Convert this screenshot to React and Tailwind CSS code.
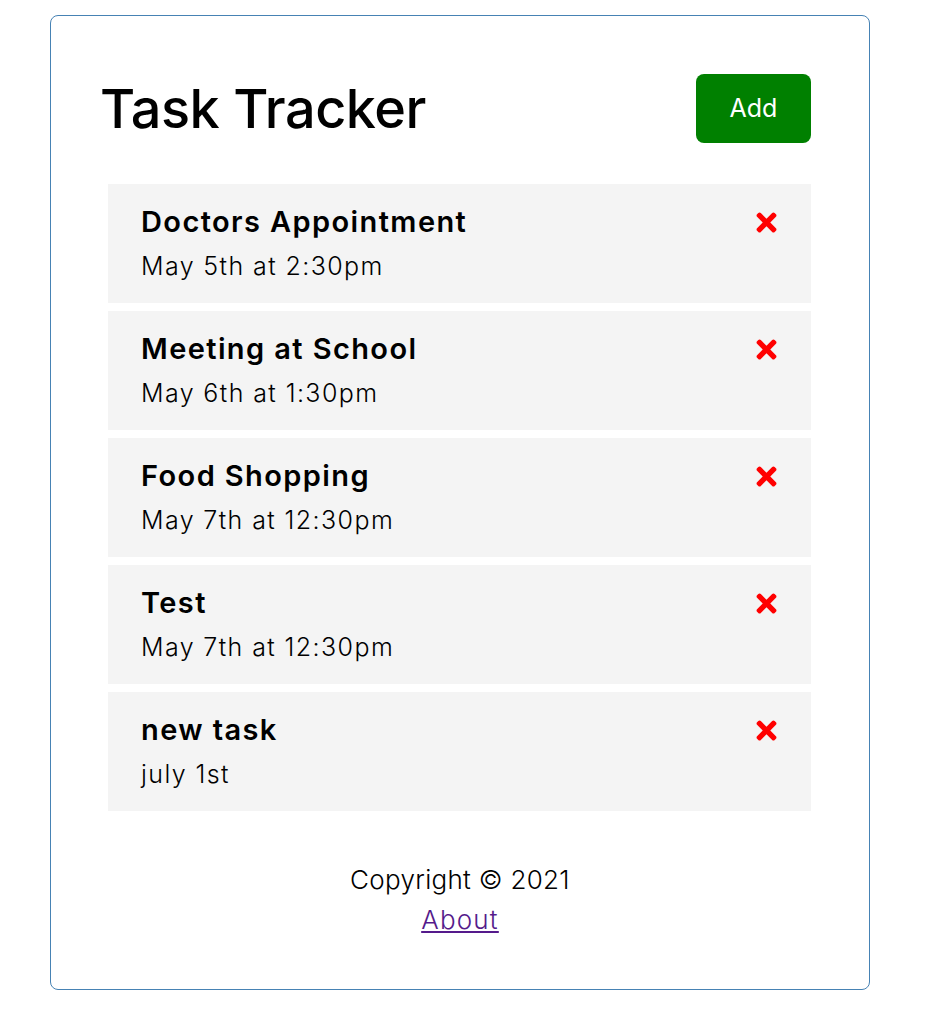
import { FaTimes } from 'react-icons/fa'

const tasks = [
  { id: 1, text: 'Doctors Appointment', day: 'May 5th at 2:30pm' },
  { id: 2, text: 'Meeting at School', day: 'May 6th at 1:30pm' },
  { id: 3, text: 'Food Shopping', day: 'May 7th at 12:30pm' },
  { id: 4, text: 'Test', day: 'May 7th at 12:30pm' },
  { id: 5, text: 'new task', day: 'july 1st' },
]

function Task({ task }) {
  return (
    <div className="bg-[#f4f4f4] pt-[18px] pb-[17px] pl-[33px] pr-[30px]">
      <h3 className="flex items-center justify-between text-[29px] leading-[40px] font-semibold tracking-[1.4px] text-black">
        {task.text}
        <FaTimes className="text-[#ff0000] cursor-pointer" />
      </h3>
      <p className="mt-[4px] text-[25px] leading-[40px] font-light tracking-[1.4px] text-black">{task.day}</p>
    </div>
  )
}

export default function App() {
  return (
    <div
      className="pt-[15px] pb-[28px] bg-white"
      style={{ fontFamily: 'Inter, "Open Sans", sans-serif' }}
    >
      <div className="ml-[50px] w-[820px] rounded-[8px] border border-[#4682b4] px-[49px] pt-[58px] pb-[49px]">
        <header className="flex h-[69px] items-center justify-between">
          <h1 className="text-[54px] font-medium leading-none tracking-[-0.5px] text-black">Task Tracker</h1>
          <button
            type="button"
            className="mr-[9px] h-[69px] w-[115px] rounded-[8px] bg-[#008000] text-[25px] text-white"
          >
            Add
          </button>
        </header>

        <div className="mt-[41px] ml-[8px] flex w-[703px] flex-col gap-[8px]">
          {tasks.map(task => (
            <Task key={task.id} task={task} />
          ))}
        </div>

        <footer className="mt-[49px] text-center text-[26px] leading-[40px] font-light tracking-[0.3px] text-black">
          <p>Copyright &copy; 2021</p>
          <a href="#about" className="text-[#551a8b] underline tracking-[1.2px]">About</a>
        </footer>
      </div>
    </div>
  )
}
